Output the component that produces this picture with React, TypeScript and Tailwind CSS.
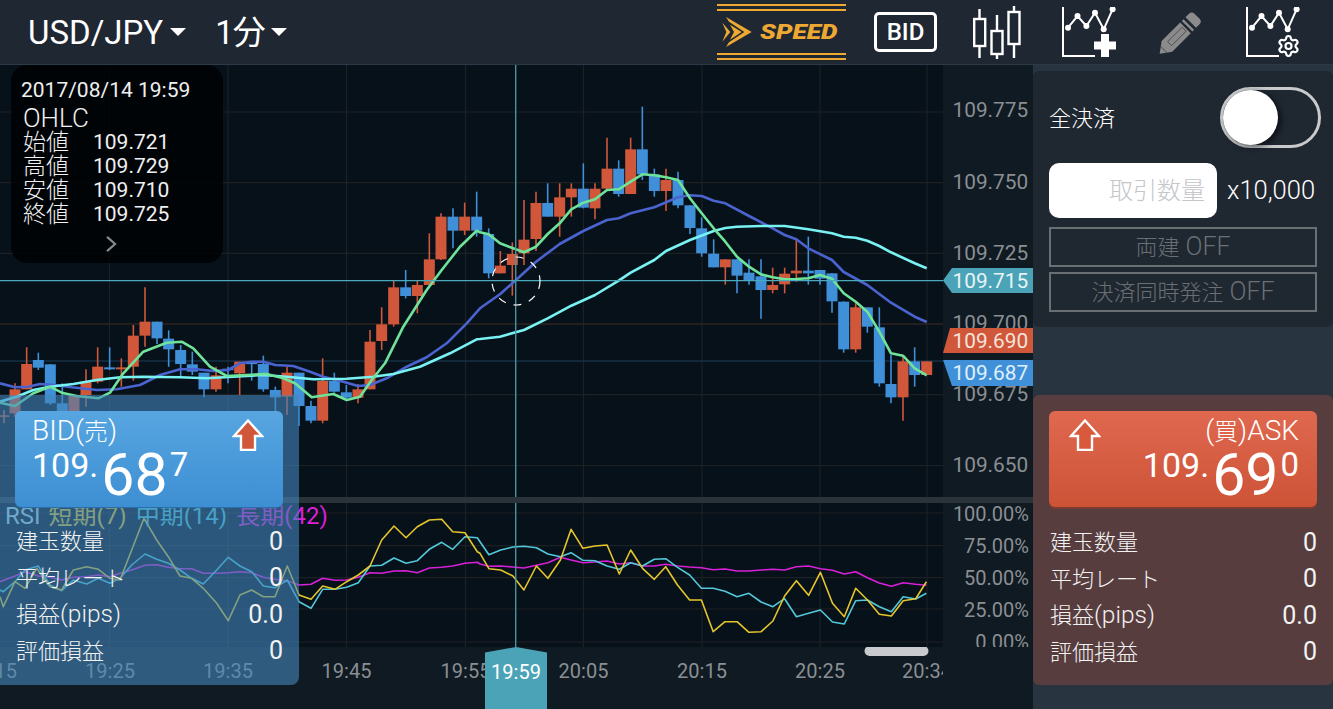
import React from 'react';
import { Settings } from 'lucide-react';

type Pt = [number, number];
type Candle = [number, number, number, number, number, 'r' | 'b'];

const RED = '#d0573a';
const BLUE = '#3f90d8';
const GRID = '#1e2123';

const GRID_X = [109.5, 228, 346.5, 465.5, 583.5, 702, 820, 927];
const PRICE_Y = [112, 182.7, 253.3, 324, 394.7, 465.5];
const RSI_Y = [513, 545.7, 577.7, 609, 642];

// points were read off 3x crops, so they stay in crop units here
const left3 = (p: Pt): Pt => [p[0] / 3, 270 + p[1] / 3];
const right3 = (p: Pt): Pt => [480 + p[0] / 3, 90 + p[1] / 3];
const rsiL = (p: Pt): Pt => [p[0] / 3, 490 + p[1] / 3];
const rsiR = (p: Pt): Pt => [480 + p[0] / 2.8, 490 + p[1] / 3];
const toPoints = (pts: Pt[]) => pts.map((p) => `${p[0].toFixed(1)},${p[1].toFixed(1)}`).join(' ');

const leftCandles: Candle[] = [
  [12, 420, 460, 436, 440, 'r'], [45, 340, 440, 358, 430, 'r'], [80, 232, 358, 282, 358, 'r'], [115, 248, 300, 270, 293, 'b'],
  [151, 282, 405, 283, 400, 'b'], [187, 340, 445, 400, 440, 'b'], [222, 375, 430, 375, 425, 'r'], [258, 298, 410, 335, 375, 'r'],
  [293, 232, 340, 290, 335, 'r'], [329, 232, 300, 292, 298, 'b'], [364, 265, 350, 292, 298, 'r'], [400, 165, 332, 197, 290, 'r'],
  [435, 52, 230, 155, 197, 'r'], [471, 155, 222, 155, 205, 'b'], [506, 181, 290, 206, 238, 'b'], [542, 225, 320, 240, 282, 'b'],
  [577, 245, 315, 283, 305, 'b'], [612, 310, 382, 308, 358, 'b'], [648, 290, 365, 316, 358, 'r'], [684, 290, 340, 296, 300, 'b'],
  [719, 275, 375, 275, 310, 'r'], [755, 275, 332, 278, 282, 'b'], [790, 257, 365, 282, 358, 'b'], [826, 350, 425, 360, 382, 'b'],
  [861, 290, 435, 308, 380, 'r'], [897, 308, 468, 308, 408, 'b'], [933, 392, 460, 408, 452, 'b'], [968, 265, 460, 333, 452, 'r'],
  [1003, 308, 368, 333, 365, 'b'], [1039, 345, 385, 367, 383, 'b'], [1074, 342, 400, 358, 383, 'r'], [1110, 180, 358, 215, 358, 'r'],
  [1145, 112, 240, 163, 213, 'r'], [1181, 30, 170, 52, 163, 'r'], [1217, 0, 85, 52, 78, 'b'], [1252, 30, 130, 45, 78, 'r'],
  [1288, -110, 45, -32, 45, 'r'], [1323, -170, -30, -160, -32, 'r'], [1359, -185, -65, -160, -118, 'b'], [1394, -202, -105, -160, -118, 'r'],
  [1430, -235, -100, -160, -118, 'b'],
];

const rightCandles: Candle[] = [
  [26, 415, 565, 432, 550, 'b'], [61, 483, 550, 527, 550, 'r'], [97, 457, 617, 492, 525, 'r'], [132, 330, 525, 449, 490, 'r'],
  [168, 305, 483, 339, 447, 'r'], [203, 280, 380, 339, 380, 'b'], [239, 280, 440, 322, 380, 'r'], [274, 280, 380, 296, 322, 'r'],
  [310, 220, 355, 296, 353, 'b'], [345, 280, 388, 296, 355, 'r'], [381, 143, 296, 236, 296, 'r'], [416, 211, 320, 236, 312, 'b'],
  [452, 143, 312, 178, 312, 'r'], [487, 50, 270, 178, 253, 'b'], [523, 236, 320, 253, 303, 'b'], [558, 236, 363, 270, 303, 'r'],
  [594, 245, 355, 270, 346, 'b'], [630, 346, 432, 346, 414, 'b'], [665, 382, 500, 415, 490, 'b'], [701, 448, 532, 491, 532, 'b'],
  [736, 508, 584, 508, 532, 'r'], [771, 508, 610, 508, 557, 'b'], [807, 508, 584, 548, 570, 'b'], [843, 508, 686, 559, 600, 'b'],
  [878, 533, 610, 585, 600, 'r'], [914, 533, 610, 551, 583, 'r'], [949, 448, 575, 542, 550, 'r'], [985, 440, 584, 542, 550, 'b'],
  [1020, 540, 584, 540, 566, 'b'], [1056, 550, 668, 550, 634, 'b'], [1091, 634, 788, 635, 778, 'b'], [1127, 640, 788, 652, 778, 'r'],
  [1162, 652, 728, 652, 710, 'b'], [1198, 652, 890, 712, 880, 'b'], [1233, 795, 940, 882, 922, 'b'], [1269, 800, 992, 814, 922, 'r'],
  [1304, 772, 890, 814, 855, 'b'], [1340, 814, 855, 814, 855, 'r'],
];

const greenLine: Pt[] = [
  ...([[0, 398], [45, 408], [100, 370], [150, 350], [185, 368], [230, 378], [295, 385], [330, 368], [370, 310], [430, 245], [500, 218], [545, 215], [580, 235], [630, 290], [680, 318], [740, 315], [800, 312], [850, 325], [885, 340], [935, 382], [1000, 372], [1040, 390], [1080, 380], [1115, 330], [1155, 280], [1210, 170], [1280, 60], [1325, 0], [1380, -70], [1430, -118]] as Pt[]).map(left3),
  ...([[0, 427], [26, 433], [60, 460], [132, 487], [168, 470], [203, 432], [239, 400], [274, 358], [310, 338], [345, 328], [381, 300], [416, 298], [452, 275], [487, 253], [523, 256], [558, 262], [594, 270], [630, 325], [665, 370], [701, 415], [736, 455], [771, 500], [807, 530], [843, 553], [878, 562], [914, 568], [949, 567], [985, 565], [1020, 555], [1056, 566], [1091, 610], [1127, 635], [1162, 665], [1198, 725], [1233, 790], [1269, 797], [1304, 835], [1340, 856]] as Pt[]).map(right3),
];

const blueLine: Pt[] = [
  ...([[0, 340], [45, 352], [85, 350], [120, 342], [165, 345], [215, 352], [290, 360], [350, 358], [420, 345], [480, 315], [540, 298], [590, 298], [640, 303], [684, 300], [720, 280], [755, 275], [790, 275], [826, 285], [880, 288], [930, 305], [970, 320], [1030, 335], [1074, 348], [1110, 345], [1160, 325], [1220, 290], [1280, 262], [1340, 220], [1400, 160]] as Pt[]).map(left3),
  ...([[0, 655], [61, 612], [108, 570], [168, 515], [239, 462], [310, 423], [381, 390], [416, 385], [452, 370], [523, 352], [594, 322], [630, 316], [665, 318], [701, 332], [736, 340], [807, 378], [878, 415], [914, 435], [949, 448], [985, 475], [1056, 510], [1091, 546], [1162, 585], [1233, 638], [1304, 680], [1340, 696]] as Pt[]).map(right3),
];

const cyanLine: Pt[] = [
  ...([[0, 395], [50, 380], [100, 360], [150, 350], [220, 342], [290, 330], [360, 322], [430, 320], [540, 322], [620, 325], [700, 320], [790, 315], [860, 320], [940, 328], [1040, 326], [1120, 320], [1180, 312], [1260, 290], [1350, 250], [1430, 208]] as Pt[]).map(left3),
  ...([[0, 747], [60, 740], [132, 720], [203, 685], [274, 647], [345, 615], [416, 572], [452, 548], [523, 510], [558, 483], [630, 450], [701, 423], [736, 414], [771, 410], [843, 408], [914, 408], [985, 418], [1056, 430], [1091, 440], [1127, 443], [1162, 452], [1198, 468], [1233, 487], [1304, 520], [1340, 535]] as Pt[]).map(right3),
];

const rsiShort: Pt[] = [
  ...([[0, 320], [10, 350], [45, 275], [75, 295], [110, 235], [150, 290], [185, 300], [220, 240], [260, 230], [295, 238], [330, 265], [360, 270], [395, 180], [432, 85], [470, 150], [505, 200], [540, 258], [575, 265], [610, 295], [650, 340], [685, 392], [720, 315], [755, 300], [790, 320], [825, 320], [862, 228], [897, 315], [933, 328], [968, 288], [1005, 298], [1040, 275], [1075, 255], [1110, 228], [1145, 150], [1182, 108], [1218, 143], [1252, 110], [1288, 90], [1325, 88], [1358, 125], [1395, 128], [1432, 185]] as Pt[]).map(rsiL),
  ...([[0, 190], [25, 236], [58, 240], [92, 258], [123, 300], [158, 228], [190, 265], [225, 210], [255, 118], [288, 175], [322, 168], [356, 165], [390, 252], [422, 180], [455, 235], [488, 268], [520, 230], [553, 285], [587, 330], [620, 330], [653, 425], [686, 395], [720, 395], [753, 427], [787, 425], [820, 393], [853, 318], [886, 272], [920, 316], [953, 247], [987, 340], [1020, 380], [1052, 295], [1085, 330], [1118, 373], [1152, 378], [1185, 332], [1220, 326], [1250, 275]] as Pt[]).map(rsiR),
];

const rsiMid: Pt[] = [
  ...([[0, 300], [10, 305], [45, 275], [75, 240], [115, 228], [150, 285], [185, 302], [220, 270], [260, 282], [295, 265], [330, 280], [360, 265], [395, 225], [435, 192], [470, 208], [505, 220], [540, 240], [575, 265], [610, 282], [650, 240], [685, 202], [720, 228], [755, 245], [790, 288], [825, 293], [862, 270], [897, 335], [933, 355], [968, 298], [1005, 298], [1040, 292], [1075, 278], [1110, 228], [1145, 226], [1182, 204], [1218, 220], [1252, 212], [1288, 178], [1325, 157], [1358, 178], [1395, 140], [1432, 143]] as Pt[]).map(rsiL),
  ...([[0, 155], [25, 194], [58, 180], [92, 171], [123, 169], [158, 173], [190, 192], [225, 200], [255, 188], [288, 211], [322, 212], [356, 228], [390, 238], [422, 218], [455, 228], [488, 208], [520, 206], [553, 232], [587, 255], [620, 295], [653, 295], [686, 304], [720, 320], [753, 310], [787, 336], [820, 350], [853, 326], [886, 380], [920, 370], [953, 360], [987, 396], [1020, 402], [1052, 332], [1085, 330], [1118, 350], [1152, 365], [1185, 320], [1220, 327], [1250, 310]] as Pt[]).map(rsiR),
];

const rsiLong: Pt[] = [
  ...([[0, 275], [45, 258], [75, 245], [115, 258], [150, 262], [185, 270], [220, 262], [260, 260], [295, 255], [330, 260], [360, 250], [395, 240], [435, 226], [470, 224], [505, 232], [540, 236], [575, 236], [610, 250], [650, 250], [685, 248], [720, 245], [755, 248], [790, 262], [825, 268], [862, 272], [897, 285], [933, 283], [968, 265], [1005, 271], [1040, 270], [1075, 262], [1110, 248], [1145, 250], [1182, 243], [1218, 242], [1252, 248], [1288, 234], [1325, 232], [1358, 228], [1395, 220], [1432, 217]] as Pt[]).map(rsiL),
  ...([[0, 222], [25, 229], [58, 228], [92, 231], [123, 234], [158, 226], [190, 218], [225, 202], [255, 210], [288, 218], [322, 216], [356, 213], [390, 222], [422, 218], [455, 228], [488, 228], [520, 223], [553, 228], [587, 231], [620, 233], [653, 239], [686, 237], [720, 243], [753, 243], [787, 240], [820, 238], [853, 240], [886, 230], [920, 228], [953, 236], [987, 241], [1020, 252], [1052, 245], [1085, 263], [1118, 279], [1152, 289], [1185, 278], [1220, 283], [1250, 286]] as Pt[]).map(rsiR),
];

const POSITION_ROWS: [string, string, string][] = [
  ['建玉数量', '', '0'],
  ['平均レート', '', '0'],
  ['損益', '(pips)', '0.0'],
  ['評価損益', '', '0'],
];

const Caret = () => <svg viewBox="0 0 16 8" className="w-4 h-2"><path d="M0 0h16L8 8z" fill="#fff" /></svg>;

const CandleMark = ({ c, toPt }: { c: Candle; toPt: (p: Pt) => Pt }) => {
  const [x, wickTop] = toPt([c[0], c[1]]);
  const [, wickBottom] = toPt([c[0], c[2]]);
  const [, bodyTop] = toPt([c[0], c[3]]);
  const [, bodyBottom] = toPt([c[0], c[4]]);
  const fill = c[5] === 'r' ? RED : BLUE;
  return (
    <g>
      <line x1={x} x2={x} y1={wickTop} y2={wickBottom} stroke={fill} strokeWidth="1.6" />
      <rect x={x - 5.5} y={bodyTop} width="11" height={Math.max(bodyBottom - bodyTop, 1.5)} fill={fill} />
    </g>
  );
};

const PriceChart = () => (
  <svg viewBox="0 65 943 432" className="w-[943px] h-[432px] shrink-0 block bg-[#07111a]">
    {PRICE_Y.map((y) => <line key={y} x1="0" x2="943" y1={y} y2={y} stroke={GRID} strokeWidth="1.2" />)}
    {GRID_X.map((x) => <line key={x} x1={x} x2={x} y1="65" y2="497" stroke={GRID} strokeWidth="1.2" />)}
    <line x1="0" x2="943" y1="324" y2="324" stroke="#33261f" strokeWidth="1.2" />
    <line x1="0" x2="943" y1="361" y2="361" stroke="#1d3f5a" strokeWidth="1.2" />
    {leftCandles.map((c) => <CandleMark key={c[0]} c={c} toPt={left3} />)}
    {rightCandles.map((c) => <CandleMark key={c[0]} c={c} toPt={right3} />)}
    <polyline points={toPoints(blueLine)} fill="none" stroke="#4a63cf" strokeWidth="2.6" strokeLinejoin="round" />
    <polyline points={toPoints(cyanLine)} fill="none" stroke="#78f2f2" strokeWidth="2.6" strokeLinejoin="round" />
    <polyline points={toPoints(greenLine)} fill="none" stroke="#6fe39a" strokeWidth="2.6" strokeLinejoin="round" />
    <line x1="0" x2="943" y1="280.7" y2="280.7" stroke="#49a9bd" strokeWidth="1.2" />
    <line x1="515.7" x2="515.7" y1="65" y2="497" stroke="#4a929e" strokeWidth="1.4" />
    <circle cx="516" cy="281" r="24" fill="none" stroke="#fff" strokeWidth="1.2" strokeDasharray="8 8" />
  </svg>
);

const PriceAxis = () => (
  <svg viewBox="943 65 90 432" className="w-[90px] h-[432px] shrink-0 block bg-[#0f1a22]">
    {[['109.775', 110], ['109.750', 182], ['109.725', 253], ['109.700', 323], ['109.675', 394], ['109.650', 465]].map(([label, y]) => (
      <text key={label} x="952.5" y={y} dominantBaseline="central" className="text-[20.8px] fill-[#8b8f93]">{label}</text>
    ))}
    <polygon points="943,280.5 952,268 1033,268 1033,293 952,293" fill="#4ba3b8" />
    <text x="952.5" y="281" dominantBaseline="central" className="text-[20.8px] fill-[#e8f4f6]">109.715</text>
    <polygon points="950,328 1033,328 1033,353 943,353" fill={RED} />
    <text x="952.5" y="341" dominantBaseline="central" className="text-[20.8px] fill-[#f6e4de]">109.690</text>
    <polygon points="943,360 1033,360 1033,386 952,386" fill={BLUE} />
    <text x="952.5" y="373" dominantBaseline="central" className="text-[20.8px] fill-[#e0f0fb]">109.687</text>
  </svg>
);

const RsiChart = () => (
  <svg viewBox="0 503 943 144" className="w-[943px] h-[144px] shrink-0 block bg-[#07111a]">
    {RSI_Y.map((y) => <line key={y} x1="0" x2="943" y1={y} y2={y} stroke={GRID} strokeWidth="1.2" />)}
    {GRID_X.map((x) => <line key={x} x1={x} x2={x} y1="503" y2="647" stroke={GRID} strokeWidth="1.2" />)}
    <polyline points={toPoints(rsiLong)} fill="none" stroke="#d820d8" strokeWidth="1.6" strokeLinejoin="round" />
    <polyline points={toPoints(rsiMid)} fill="none" stroke="#52c8da" strokeWidth="1.6" strokeLinejoin="round" />
    <polyline points={toPoints(rsiShort)} fill="none" stroke="#e4c62c" strokeWidth="1.6" strokeLinejoin="round" />
    <line x1="515.7" x2="515.7" y1="503" y2="647" stroke="#4a929e" strokeWidth="1.4" />
  </svg>
);

const RsiAxis = () => (
  <svg viewBox="943 503 90 144" className="w-[90px] h-[144px] shrink-0 block bg-[#0f1a22]">
    {[['100.00%', 514], ['75.00%', 546], ['50.00%', 578], ['25.00%', 610], ['0.00%', 642]].map(([label, y]) => (
      <text key={label} x="1029" y={y} textAnchor="end" dominantBaseline="central" className="text-[20px] fill-[#8b8f93]">{label}</text>
    ))}
  </svg>
);

const TimeAxis = () => (
  <svg viewBox="0 647 943 62" className="w-[943px] h-[62px] block">
    {[['19:15', -8], ['19:25', 110], ['19:35', 228], ['19:45', 346.5], ['19:55', 465.5], ['20:05', 583.5], ['20:15', 702], ['20:25', 820], ['20:34', 927]].map(([label, x]) => (
      <text key={label} x={x} y="671" textAnchor="middle" dominantBaseline="central" className="text-[20px] fill-[#8b8f93]">{label}</text>
    ))}
    <polygon points="485,652.5 516,647 547,652.5 547,709 485,709" fill="#4ba3b8" />
    <text x="516" y="672" textAnchor="middle" dominantBaseline="central" className="text-[20px] fill-white">19:59</text>
    <rect x="864.5" y="646" width="64" height="10" rx="5" fill="#c9cacd" />
  </svg>
);

const SpeedLogo = () => (
  <div className="w-[129px] h-[56px] border-y-[7px] border-double border-[#eda931] flex items-center pl-[5px] gap-[8px]">
    <svg viewBox="22 48 88 90" className="w-[30px] h-[30px] shrink-0" fill="#eda931">
      <path d="M33 48L110 93L33 138L42 124L88 93L42 62Z" />
      <path d="M45 71L80 93L45 116L57 93Z" />
      <path d="M22 65L46 93L22 122L34 93Z" />
    </svg>
    <span className="text-[21px] leading-none italic font-black scale-x-[1.25] origin-left text-[#eda931]">SPEED</span>
  </div>
);

const CandlesIcon = () => (
  <svg viewBox="0 0 48 53" className="w-[48px] h-[53px] shrink-0" fill="none" stroke="#fff" strokeWidth="2.4">
    <path d="M6.5 3v49M24 9v44M41 0v52" />
    <rect x="1.2" y="13" width="11" height="27" fill="#1f2733" />
    <rect x="18.5" y="25" width="11" height="23" fill="#1f2733" />
    <rect x="35.5" y="6" width="11" height="32" fill="#1f2733" />
  </svg>
);

const TrendLines = () => (
  <>
    <path d="M1 0v49h32" fill="none" stroke="#fff" strokeWidth="2" />
    <polyline points="6,20.7 15.5,9 24.4,19 33,5.7 41.7,22.3 50.6,2.3" fill="none" stroke="#fff" strokeWidth="2" />
    {[[6, 20.7], [15.5, 9], [24.4, 19], [33, 5.7], [41.7, 22.3], [50.6, 2.3]].map(([cx, cy]) => (
      <circle key={cx} cx={cx} cy={cy} r="3" fill="#fff" />
    ))}
  </>
);

const AddChartIcon = () => (
  <svg viewBox="0 0 54 50" className="w-[54px] h-[50px] shrink-0">
    <TrendLines />
    <path d="M39 27h8v7.5h7v8h-7V50h-8v-7.5h-7v-8h7z" fill="#fff" />
  </svg>
);

const PencilIcon = () => (
  <svg viewBox="28 26 130 130" className="w-[43px] h-[43px] shrink-0" fill="#8b8b8b">
    <path d="M30 155L36 117L92 61L124 93L68 149Z" />
    <path d="M97 56L102 51L134 83L129 88Z" />
    <path d="M108 45L118 35Q127 26 136 35L150 49Q159 58 150 67L140 77Z" />
    <path d="M54 119L98 75L110 87L66 131Z" fill="none" stroke="#4a4f54" strokeWidth="3" />
    <path d="M33 133L52 152" fill="none" stroke="#4a4f54" strokeWidth="3" />
  </svg>
);

const ChartSettingsIcon = () => (
  <svg viewBox="0 0 54 50" className="w-[54px] h-[50px] shrink-0">
    <TrendLines />
    <Settings x="30.5" y="27" width="24" height="24" color="#fff" strokeWidth={2.2} />
  </svg>
);

const Header = () => (
  <header className="h-[65px] shrink-0 bg-[#1f2733] border-b border-[#2c3a47] flex items-center pl-[28px] pr-[33px]">
    <span className="text-[33px] leading-none text-white">USD/JPY</span>
    <span className="ml-[7px]"><Caret /></span>
    <span className="ml-[29px] text-[33px] leading-none text-white tracking-[-1px]">1分</span>
    <span className="ml-[6px]"><Caret /></span>
    <div className="ml-auto flex items-center">
      <SpeedLogo />
      <div className="ml-[28px] w-[63px] h-[40px] rounded-[5px] border-[3px] border-white flex items-center justify-center text-[24px] font-medium text-white">BID</div>
      <div className="ml-[36px]"><CandlesIcon /></div>
      <div className="ml-[41px]"><AddChartIcon /></div>
      <div className="ml-[43px]"><PencilIcon /></div>
      <div className="ml-[44px]"><ChartSettingsIcon /></div>
    </div>
  </header>
);

const OhlcBox = () => (
  <div className="absolute left-[11px] top-0 w-[212px] h-[198px] rounded-[16px] bg-[#010306]/90 text-[#f0f0f0] pl-[10px] pt-[13px]">
    <div className="text-[21px] leading-[24px]">2017/08/14 19:59</div>
    <div className="mt-[4px] ml-[2px] text-[26px] leading-[24px] font-light">OHLC</div>
    {[['始値', '109.721'], ['高値', '109.729'], ['安値', '109.710'], ['終値', '109.725']].map(([name, value]) => (
      <div key={name} className="ml-[2px] flex items-center h-[24px]">
        <span className="w-[70px] text-[23px] leading-none font-light">{name}</span>
        <span className="text-[21px] leading-none">{value}</span>
      </div>
    ))}
    <svg viewBox="0 0 12 18" className="w-[11px] h-[16px] ml-[85px] mt-[10px]"><path d="M1 1l9 8-9 8" fill="none" stroke="#8a8a8a" strokeWidth="2.4" /></svg>
  </div>
);

const RsiLegend = () => (
  <div className="absolute left-[5px] top-0 flex gap-[9px] text-[24px] leading-[26px]">
    <span className="text-[#b4dce0]">RSI</span>
    <span className="text-[#e4c62c] -ml-[1px]">短期(7)</span>
    <span className="text-[#52c8da]">中期(14)</span>
    <span className="text-[#d820d8]">長期(42)</span>
  </div>
);

const ArrowUp = ({ fill }: { fill: string }) => (
  <svg viewBox="0 0 32 32" className="w-[32px] h-[32px]">
    <path d="M16 1.5L30 17H23V31H9V17H2z" fill={fill} stroke="#fff" strokeWidth="2.4" />
  </svg>
);

const PriceFigure = ({ head, big, tail }: { head: string; big: string; tail: string }) => (
  <div className="flex items-start text-white">
    <span className="text-[34px] leading-none mt-[3px]">{head}</span>
    <span className="text-[59px] leading-none ml-[3px]">{big}</span>
    <span className="text-[33px] leading-none mt-[3px] ml-[2px]">{tail}</span>
  </div>
);

const PositionRows = () => (
  <div className="pl-[1px]">
    {POSITION_ROWS.map(([label, latin, value]) => (
      <div key={label} className="h-[36.5px] flex items-center justify-between leading-none text-[#f2f2f2]">
        <span className="text-[22px] font-light">{label}<span className="text-[24.5px]">{latin}</span></span>
        <span className="text-[25px]">{value}</span>
      </div>
    ))}
  </div>
);

const BidPanel = () => (
  <div className="absolute left-0 top-[330px] w-[299px] h-[290px] rounded-br-[8px] bg-[#4387bc]/60 pt-[16px] pl-[15px] pr-[16px]">
    <div className="relative h-[96px] rounded-[6px] bg-gradient-to-b from-[#57a6e1] to-[#3d8fd3] pl-[17px] pt-[8px] shadow-[0_1px_0_#2c6ea5]">
      <div className="text-[28px] leading-[24px] text-white font-light">BID(<span className="text-[24px]">売</span>)</div>
      <div className="mt-[1px]"><PriceFigure head="109." big="68" tail="7" /></div>
      <div className="absolute left-[217px] top-[8px]"><ArrowUp fill={RED} /></div>
    </div>
    <div className="mt-[16px]"><PositionRows /></div>
  </div>
);

const SidePanel = () => (
  <aside className="w-[300px] shrink-0 pt-[6px] bg-[#28343f]">
    <div className="h-[256px] rounded-[6px] bg-[#1f2731] pt-[16px] px-[16px]">
      <div className="flex items-center justify-between h-[61px] -mr-[4px]">
        <span className="text-[22px] leading-none text-white font-light mt-[3px]">全決済</span>
        <div className="w-[101px] h-[61px] rounded-full border-[3px] border-[#c8cacc] flex items-center">
          <div className="w-[55px] h-[55px] rounded-full bg-white shadow-[3px_2px_6px_rgba(0,0,0,0.6)]" />
        </div>
      </div>
      <div className="flex items-center mt-[15px]">
        <div className="w-[168px] h-[55px] rounded-[10px] bg-white flex items-center justify-end pr-[12px] text-[24px] font-light text-[#c4c6ca]">取引数量</div>
        <span className="ml-[10px] text-[25.5px] leading-none font-light text-white">x10,000</span>
      </div>
      <div className="mt-[9px] h-[40px] border-[2px] border-[#6a6f73] flex items-center justify-center text-[22px] text-[#6a6f73] font-light">両建 <span className="ml-[6px] text-[25px]">OFF</span></div>
      <div className="mt-[5px] h-[40px] border-[2px] border-[#6a6f73] flex items-center justify-center text-[22px] text-[#6a6f73] font-light">決済同時発注 <span className="ml-[6px] text-[25px]">OFF</span></div>
    </div>
    <div className="mt-[68px] h-[290px] rounded-[6px] bg-[#583d3f] pt-[16px] px-[16px]">
      <div className="relative h-[96px] rounded-[6px] bg-gradient-to-b from-[#e0684f] to-[#cc5336] shadow-[0_2px_0_#7d3a2e] pt-[8px] pr-[18px] flex flex-col items-end">
        <div className="text-[28px] leading-[24px] text-white font-light">(<span className="text-[24px]">買</span>)ASK</div>
        <div className="mt-[1px]"><PriceFigure head="109." big="69" tail="0" /></div>
        <div className="absolute left-[20px] top-[8px]"><ArrowUp fill="#d9593d" /></div>
      </div>
      <div className="mt-[17px]"><PositionRows /></div>
    </div>
  </aside>
);

export default function App() {
  return (
    <div className="w-[1333px] h-[709px] overflow-hidden flex flex-col bg-[#28343f] font-[Roboto,'Noto_Sans_CJK_JP',sans-serif]">
      <Header />
      <div className="flex flex-1 min-h-0">
        <main className="relative w-[1033px] shrink-0 flex flex-col">
          <div className="flex">
            <PriceChart />
            <PriceAxis />
          </div>
          <div className="h-[6px] bg-[#2a333a]" />
          <div className="relative flex">
            <RsiChart />
            <RsiAxis />
            <RsiLegend />
          </div>
          <div className="flex-1 bg-[#0f1a22]">
            <TimeAxis />
          </div>
          <OhlcBox />
          <BidPanel />
        </main>
        <SidePanel />
      </div>
    </div>
  );
}
